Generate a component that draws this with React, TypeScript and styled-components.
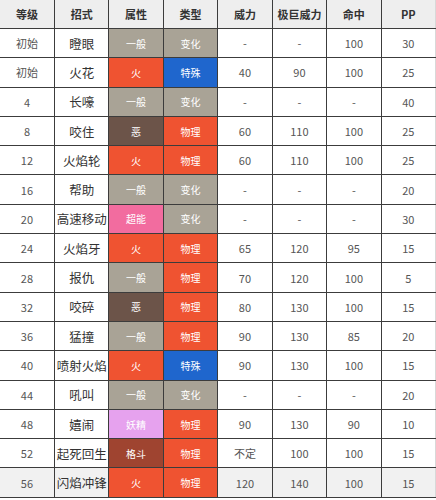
import { FC } from "react";
import styled, { createGlobalStyle } from "styled-components";

const GlobalStyle = createGlobalStyle`
  html, body {
    margin: 0;
    padding: 0;
    background: #fff;
  }
  body {
    font-family: "Noto Sans CJK SC", "Noto Sans", sans-serif;
  }
`;

const TYPE_COLORS: Record<string, string> = {
  一般: "#a9a396",
  火: "#ef5331",
  恶: "#6c5449",
  超能: "#f26c9f",
  妖精: "#e6a2ee",
  格斗: "#9f4430",
  物理: "#ef5331",
  特殊: "#1f66cd",
  变化: "#a9a396",
};

type Move = {
  level: string;
  name: string;
  type: string;
  kind: string;
  power: string;
  maxPower: string;
  accuracy: string;
  pp: string;
};

const moves: Move[] = [
  { level: "初始", name: "瞪眼", type: "一般", kind: "变化", power: "-", maxPower: "-", accuracy: "100", pp: "30" },
  { level: "初始", name: "火花", type: "火", kind: "特殊", power: "40", maxPower: "90", accuracy: "100", pp: "25" },
  { level: "4", name: "长嚎", type: "一般", kind: "变化", power: "-", maxPower: "-", accuracy: "-", pp: "40" },
  { level: "8", name: "咬住", type: "恶", kind: "物理", power: "60", maxPower: "110", accuracy: "100", pp: "25" },
  { level: "12", name: "火焰轮", type: "火", kind: "物理", power: "60", maxPower: "110", accuracy: "100", pp: "25" },
  { level: "16", name: "帮助", type: "一般", kind: "变化", power: "-", maxPower: "-", accuracy: "-", pp: "20" },
  { level: "20", name: "高速移动", type: "超能", kind: "变化", power: "-", maxPower: "-", accuracy: "-", pp: "30" },
  { level: "24", name: "火焰牙", type: "火", kind: "物理", power: "65", maxPower: "120", accuracy: "95", pp: "15" },
  { level: "28", name: "报仇", type: "一般", kind: "物理", power: "70", maxPower: "120", accuracy: "100", pp: "5" },
  { level: "32", name: "咬碎", type: "恶", kind: "物理", power: "80", maxPower: "130", accuracy: "100", pp: "15" },
  { level: "36", name: "猛撞", type: "一般", kind: "物理", power: "90", maxPower: "130", accuracy: "85", pp: "20" },
  { level: "40", name: "喷射火焰", type: "火", kind: "特殊", power: "90", maxPower: "130", accuracy: "100", pp: "15" },
  { level: "44", name: "吼叫", type: "一般", kind: "变化", power: "-", maxPower: "-", accuracy: "-", pp: "20" },
  { level: "48", name: "嬉闹", type: "妖精", kind: "物理", power: "90", maxPower: "130", accuracy: "90", pp: "10" },
  { level: "52", name: "起死回生", type: "格斗", kind: "物理", power: "不定", maxPower: "100", accuracy: "100", pp: "15" },
  { level: "56", name: "闪焰冲锋", type: "火", kind: "物理", power: "120", maxPower: "140", accuracy: "100", pp: "15" },
];

const Table = styled.table`
  width: 436px;
  border-collapse: collapse;
  table-layout: fixed;
`;

const HeadCell = styled.th`
  height: 28px;
  padding: 0;
  background: #eeeeee;
  color: #333;
  font-size: 11px;
  font-weight: 700;
  text-align: center;
  white-space: nowrap;
  border-right: 1px solid #3c3c3c;
  border-bottom: 1px solid #3c3c3c;

  &:last-child {
    border-right: 1px solid #d8d8d8;
  }
`;

const Row = styled.tr<{ $shaded?: boolean }>`
  background: ${(p) => (p.$shaded ? "#f1f1f1" : "#ffffff")};
`;

const Cell = styled.td<{ $big?: boolean }>`
  height: 28.3px;
  padding: 0;
  text-align: center;
  white-space: nowrap;
  overflow: hidden;
  color: ${(p) => (p.$big ? "#333" : "#555")};
  font-size: ${(p) => (p.$big ? "12.5px" : "11px")};
  border-right: 1px solid #3c3c3c;
  border-bottom: 1px solid #3c3c3c;

  &:last-child {
    border-right: 1px solid #d8d8d8;
  }
`;

const TypeCell = styled.td<{ $bg: string }>`
  padding: 0;
  text-align: center;
  white-space: nowrap;
  background: ${(p) => p.$bg};
  color: #fff;
  font-size: 10px;
  border-right: 1px solid #3c3c3c;
  border-bottom: 1px solid #3c3c3c;
`;

const headers = ["等级", "招式", "属性", "类型", "威力", "极巨威力", "命中", "PP"];

const App: FC = () => {
  return (
    <>
      <GlobalStyle />
      <Table>
        <thead>
          <tr>
            {headers.map((h) => (
              <HeadCell key={h}>{h}</HeadCell>
            ))}
          </tr>
        </thead>
        <tbody>
          {moves.map((m, i) => (
            <Row key={m.name} $shaded={i === moves.length - 1}>
              <Cell>{m.level}</Cell>
              <Cell $big>{m.name}</Cell>
              <TypeCell $bg={TYPE_COLORS[m.type]}>{m.type}</TypeCell>
              <TypeCell $bg={TYPE_COLORS[m.kind]}>{m.kind}</TypeCell>
              <Cell>{m.power}</Cell>
              <Cell>{m.maxPower}</Cell>
              <Cell>{m.accuracy}</Cell>
              <Cell>{m.pp}</Cell>
            </Row>
          ))}
        </tbody>
      </Table>
    </>
  );
};

export default App;
